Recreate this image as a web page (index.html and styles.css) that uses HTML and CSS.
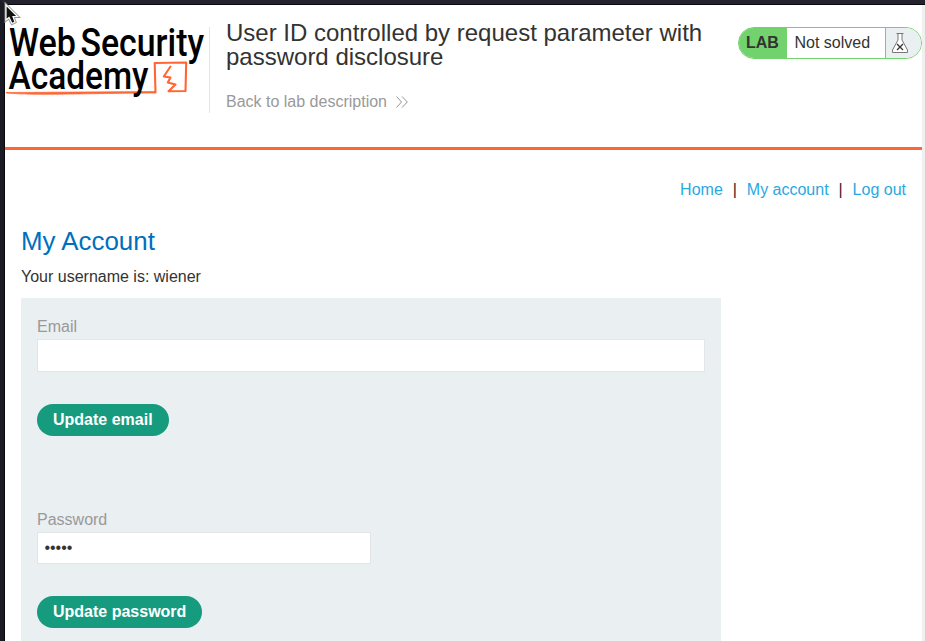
FILE: index.html
```html
<!DOCTYPE html>
<html lang="en">
<head>
<meta charset="utf-8">
<title>User ID controlled by request parameter with password disclosure</title>
<link rel="stylesheet" href="styles.css">
</head>
<body>
<div class="window">
  <div class="page">
    <header class="lab-header">
      <svg class="logo" viewBox="5 22 200 80" role="img" aria-label="Web Security Academy">
        <path class="underline" d="M6 93C35 95.600 80 93.500 155 93V91.500L6 92.500Z"/>
        <path class="mark" d="M155.500 92.500L154.700 63L186.200 62.500L185.500 91L168.500 91.300L175.500 84.500L167.800 82.500L170.500 77.500L163.800 76.500L170.500 66.500"/>
        <g class="logo-text">
          <text x="9" y="55.500" textLength="67" lengthAdjust="spacingAndGlyphs">Web</text>
          <text x="80.500" y="55.500" textLength="123.500" lengthAdjust="spacingAndGlyphs">Security</text>
          <text x="8.500" y="88.500" textLength="140" lengthAdjust="spacingAndGlyphs">Academy</text>
        </g>
      </svg>
      <div class="title">
        <h2>User ID controlled by request parameter with password disclosure</h2>
        <a class="back" href="#">Back to lab description
          <svg class="chevrons" viewBox="0 0 12 12"><path d="M.5.500L5.500 6L.5 11.500M6 .5L11.300 6L6 11.500"/></svg>
        </a>
      </div>
      <div class="status">
        <span class="tag">LAB</span>
        <p>Not solved</p>
        <span class="flask">
          <svg viewBox="0 0 18 22"><path class="glass" d="M5.500 1.500H12.500M7 1.500V8L1.500 18V20.500H16.500V18L11 8V1.500"/><path class="cross" d="M6 12L12 18M12 12L6 18"/></svg>
        </span>
      </div>
    </header>
    <nav><a href="#">Home</a><span>|</span><a href="#">My account</a><span>|</span><a href="#">Log out</a></nav>
    <main>
      <h1>My Account</h1>
      <p class="username">Your username is: wiener</p>
      <div class="panel">
        <form class="email-form">
          <label for="email">Email</label>
          <input id="email" type="email">
          <button type="button">Update email</button>
        </form>
        <form>
          <label for="password">Password</label>
          <input id="password" class="short" type="password" value="peter">
          <button type="button">Update password</button>
        </form>
      </div>
    </main>
  </div>
  <div class="scrollbar"></div>
</div>
<svg class="cursor" viewBox="0 0 14 20"><path class="edge" d="M1 0V15L4 12.500L7 18.500L10 17L8 11.500H12.500Z"/><path class="rim" d="M1 0V15L4 12.500L7 18.500L10 17L8 11.500H12.500Z"/></svg>
</body>
</html>
```
FILE: styles.css
```css
* { box-sizing: border-box; }
body {
  margin: 0;
  height: 641px;
  overflow: hidden;
  background: #22232e;
  color: #333332;
  font: 16px/18px "Liberation Sans", Arial, sans-serif;
}
h1, h2, p { margin: 0; font-weight: normal; }
a { text-decoration: none; }
.window {
  display: flex;
  height: 641px;
  border-top: 4px solid #22232e;
  border-left: 4px solid #1b1b25;
  box-shadow: inset 1px 1px #08080c;
  padding: 1px 0 0 1px;
}
.page { flex: 1; overflow: hidden; background: #fff; }
.scrollbar { width: 3px; background: #f0f0f0; }

.lab-header {
  display: flex;
  align-items: flex-start;
  height: 145px;
  border-bottom: 3px solid #ff6633;
}
.logo { width: 200px; height: 80px; margin-top: 17px; flex: none; overflow: visible; }
.logo-text { font: 500 38px Roboto, sans-serif; fill: #000; }
.underline { fill: #ff6633; stroke: #ff6633; stroke-width: .7; }
.mark { fill: none; stroke: #ff6633; stroke-width: 2.1; stroke-linejoin: round; stroke-linecap: round; }
.title {
  flex: none;
  margin: 22px 0 0 4px;
  height: 86px;
  width: 512px;
  padding-left: 16px;
  border-left: 1px solid #e4e4e4;
}
.title h2 { margin-top: -6px; font-size: 24px; line-height: 24px; }
.back { display: flex; align-items: center; margin-top: 23px; line-height: 20px; color: #999; }
.chevrons { width: 12px; height: 12px; margin-left: 9px; fill: none; stroke: #888; stroke-width: .9; }

.status {
  display: flex;
  flex: none;
  width: 184px;
  height: 32px;
  margin: 22px 0 0 17px;
  overflow: hidden;
  border: 1px solid #72d26d;
  border-radius: 16px;
  line-height: 30px;
}
.tag { width: 48px; padding-left: 7px; background: #72d26d; font-weight: bold; }
.status p { width: 98px; padding-left: 7.5px; }
.flask { flex: 1; padding: 4px 0 0 5px; border-left: 1px solid #72d26d; background: #eaeff2; }
.flask svg { display: block; width: 18px; height: 22px; }
.glass { fill: #fff; stroke: #777; stroke-width: 1; }
.cross { fill: none; stroke: #333; stroke-width: 1.3; }

nav { display: flex; justify-content: flex-end; margin-top: 31px; padding-right: 16px; }
nav a { color: #29a9df; }
nav span { width: 24px; text-align: center; color: #402020; }

main { padding: 27px 16px 0; }
h1 { font-size: 25.9px; line-height: 30px; color: #0070bd; }
.username { margin-top: 12px; }
.panel { width: 700px; height: 400px; margin-top: 12px; padding: 20px 16px; background: #eaeff2; }
.email-form { height: 193px; }
label { display: block; line-height: 18px; color: #999; }
input {
  display: block;
  width: 668px;
  height: 33px;
  margin-top: 3px;
  padding: 0 6.4px;
  border: 1px solid #e3e5e6;
  outline: 0;
  background: #fff;
  color: #333332;
  font: 16px "Liberation Sans", sans-serif;
}
.short { width: 334px; height: 32px; }
button {
  height: 32px;
  margin-top: 32px;
  padding: 0 16px;
  border: 0;
  border-radius: 16px;
  background: #169b7f;
  color: #fff;
  font: bold 16px "Liberation Sans", sans-serif;
}
.cursor { position: absolute; left: 5px; top: 5px; width: 14px; height: 20px; overflow: visible; }
.edge { fill: none; stroke: #999; stroke-width: 3; }
.rim { fill: #111; stroke: #fff; stroke-width: 1.2; }
```
